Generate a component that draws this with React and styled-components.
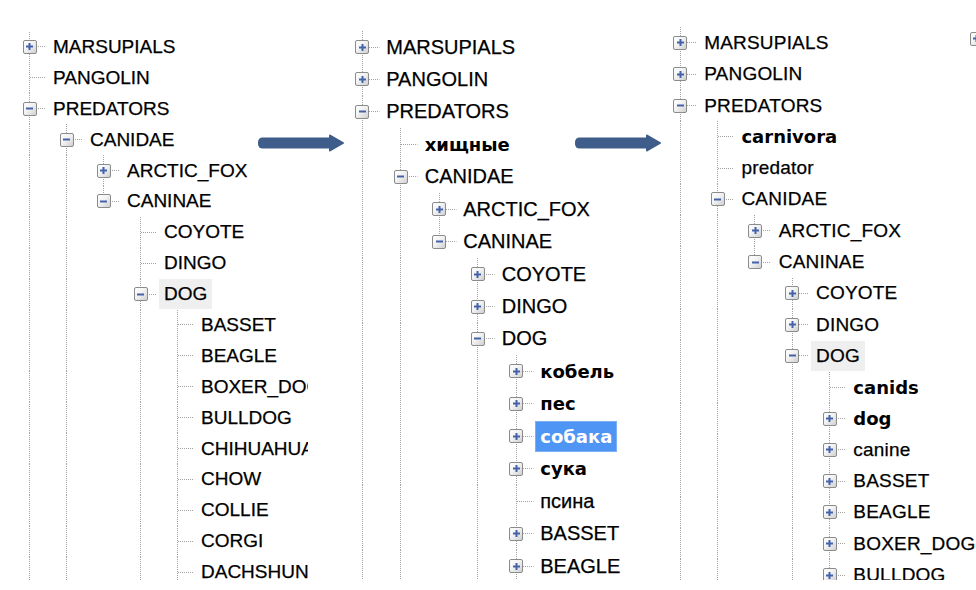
import React from 'react';
import styled, { createGlobalStyle } from 'styled-components';

const GlobalStyle = createGlobalStyle`
  html, body {
    margin: 0;
    padding: 0;
    background: #fff;
    overflow: hidden;
  }
`;

const Page = styled.div`
  position: relative;
  width: 976px;
  height: 580px;
  overflow: hidden;
  display: flex;
  align-items: flex-start;
`;

const Panel = styled.div`
  flex: 0 0 ${p => p.$width}px;
  min-width: 0;
  margin-top: ${p => p.$top}px;
  padding-left: ${p => p.$pad}px;
  box-sizing: border-box;
  overflow: ${p => (p.$clip ? 'hidden' : 'visible')};
  display: flex;
  flex-direction: column;
`;

const Row = styled.div`
  display: flex;
  align-items: center;
  height: ${p => p.$h}px;
  white-space: nowrap;
`;

const dotV = 'repeating-linear-gradient(to bottom, #a2a2a2 0 1px, transparent 1px 2px)';
const dotH = 'repeating-linear-gradient(to right, #a2a2a2 0 1px, transparent 1px 2px)';

const guideLines = ({ $v, $h, $w }) => {
  const c = Math.floor($w / 2);
  const imgs = [];
  const sizes = [];
  const pos = [];
  if ($v) {
    imgs.push(dotV);
    sizes.push(`1px ${$v === 'full' ? '100%' : '50%'}`);
    pos.push(`${c}px 0`);
  }
  if ($h) {
    imgs.push(dotH);
    sizes.push(`${$w - c - 3}px 1px`);
    pos.push(`${c + 1}px 50%`);
  }
  if (!imgs.length) return '';
  return `
    background-image: ${imgs.join(', ')};
    background-size: ${sizes.join(', ')};
    background-position: ${pos.join(', ')};
    background-repeat: no-repeat;
  `;
};

const Cell = styled.span`
  flex: 0 0 ${p => p.$w}px;
  height: 100%;
  display: flex;
  align-items: center;
  justify-content: center;
  ${guideLines}
`;

const Expander = styled.span`
  width: ${p => p.$size}px;
  height: ${p => p.$size}px;
  box-sizing: border-box;
  border: 1px solid #8a8b8b;
  border-radius: 2px;
  background: linear-gradient(135deg, #ffffff 0%, #f2f2f2 45%, #d0d0d0 100%);
  display: flex;
  align-items: center;
  justify-content: center;
`;

const Label = styled.span`
  height: ${p => p.$h}px;
  box-sizing: border-box;
  display: flex;
  align-items: center;
  padding: 0 4px;
  font-family: ${p => (p.$bold ? '"DejaVu Sans", sans-serif' : '"Liberation Sans", Arial, sans-serif')};
  font-weight: ${p => (p.$bold ? 700 : 400)};
  font-size: ${p => (p.$bold ? p.$boldSize : p.$size)}px;
  letter-spacing: ${p => (p.$bold ? 0 : p.$ls)}px;
  -webkit-text-stroke: ${p => (p.$bold ? 0 : 0.25)}px currentColor;
  color: ${p => (p.$state === 'selected' ? '#fff' : '#000')};
  background: ${p =>
    p.$state === 'selected' ? '#4f95f3' : p.$state === 'hover' ? '#efefef' : 'transparent'};
  border: 1px solid ${p => (p.$state === 'selected' ? '#7cb0f6' : 'transparent')};
`;

const Arrow = styled.svg`
  position: absolute;
  left: ${p => p.$x}px;
  top: ${p => p.$y}px;
`;

const Glyph = ({ open }) => (
  <svg width="7" height="7" viewBox="0 0 7 7">
    <rect x="0" y="2.5" width="7" height="2" fill="#4462a9" />
    {!open && <rect x="2.5" y="0" width="2" height="7" fill="#4462a9" />}
  </svg>
);

const BlueArrow = ({ x, y }) => (
  <Arrow $x={x} $y={y} width="88" height="18" viewBox="0 0 88 18">
    <rect x="1" y="3.5" width="76" height="11" rx="4.5" fill="#3f5d8a" />
    <path d="M73 1.5 L86 9 L73 16.5 Z" fill="#3f5d8a" stroke="#3f5d8a" strokeWidth="2" strokeLinejoin="round" />
  </Arrow>
);

const n = (level, label, exp, extra = {}) => ({ level, label, exp, ...extra });

const hasNext = (items, i) => {
  const L = items[i].level;
  if (items[i].last) return false;
  for (let j = i + 1; j < items.length; j++) {
    if (items[j].level < L) return false;
    if (items[j].level === L) return true;
  }
  return true;
};

const ancestorOf = (items, i, k) => {
  for (let j = i - 1; j >= 0; j--) {
    if (items[j].level === k) return j;
  }
  return -1;
};

const Tree = ({ items, cfg }) => (
  <Panel $width={cfg.width} $top={cfg.top} $pad={cfg.pad} $clip={cfg.clip}>
    {items.map((it, i) => {
      const guides = [];
      for (let k = 0; k < it.level; k++) {
        const a = ancestorOf(items, i, k);
        guides.push(a >= 0 && hasNext(items, a) ? 'full' : null);
      }
      return (
        <Row key={i} $h={cfg.rowH}>
          {guides.map((g, k) => (
            <Cell key={k} $w={cfg.indent} $v={g} />
          ))}
          <Cell $w={cfg.indent} $v={hasNext(items, i) ? 'full' : 'top'} $h>
            {it.exp && (
              <Expander $size={cfg.box}>
                <Glyph open={it.exp === '-'} />
              </Expander>
            )}
          </Cell>
          <Label
            $h={cfg.rowH - 1}
            $bold={it.bold}
            $state={it.state}
            $size={cfg.font}
            $boldSize={cfg.boldFont}
            $ls={cfg.ls}
          >
            {it.label}
          </Label>
        </Row>
      );
    })}
  </Panel>
);

const first = [
  n(0, 'MARSUPIALS', '+'),
  n(0, 'PANGOLIN', null),
  n(0, 'PREDATORS', '-'),
  n(1, 'CANIDAE', '-'),
  n(2, 'ARCTIC_FOX', '+'),
  n(2, 'CANINAE', '-', { last: true }),
  n(3, 'COYOTE', null),
  n(3, 'DINGO', null),
  n(3, 'DOG', '-', { state: 'hover' }),
  n(4, 'BASSET', null),
  n(4, 'BEAGLE', null),
  n(4, 'BOXER_DOG', null),
  n(4, 'BULLDOG', null),
  n(4, 'CHIHUAHUA', null),
  n(4, 'CHOW', null),
  n(4, 'COLLIE', null),
  n(4, 'CORGI', null),
  n(4, 'DACHSHUND', null),
];

const second = [
  n(0, 'MARSUPIALS', '+'),
  n(0, 'PANGOLIN', '+'),
  n(0, 'PREDATORS', '-'),
  n(1, 'хищные', null, { bold: true }),
  n(1, 'CANIDAE', '-'),
  n(2, 'ARCTIC_FOX', '+'),
  n(2, 'CANINAE', '-', { last: true }),
  n(3, 'COYOTE', '+'),
  n(3, 'DINGO', '+'),
  n(3, 'DOG', '-'),
  n(4, 'кобель', '+', { bold: true }),
  n(4, 'пес', '+', { bold: true }),
  n(4, 'собака', '+', { bold: true, state: 'selected' }),
  n(4, 'сука', '+', { bold: true }),
  n(4, 'псина', null),
  n(4, 'BASSET', '+'),
  n(4, 'BEAGLE', '+'),
];

const third = [
  n(0, 'MARSUPIALS', '+'),
  n(0, 'PANGOLIN', '+'),
  n(0, 'PREDATORS', '-'),
  n(1, 'carnivora', null, { bold: true }),
  n(1, 'predator', null),
  n(1, 'CANIDAE', '-'),
  n(2, 'ARCTIC_FOX', '+'),
  n(2, 'CANINAE', '-', { last: true }),
  n(3, 'COYOTE', '+'),
  n(3, 'DINGO', '+'),
  n(3, 'DOG', '-', { state: 'hover' }),
  n(4, 'canids', null, { bold: true }),
  n(4, 'dog', '+', { bold: true }),
  n(4, 'canine', '+'),
  n(4, 'BASSET', '+'),
  n(4, 'BEAGLE', '+'),
  n(4, 'BOXER_DOG', '+'),
  n(4, 'BULLDOG', '+'),
];

const fourth = [n(0, 'MARSUPIALS', '+')];

const panels = [
  { items: first, cfg: { width: 308, top: 31.5, pad: 11, indent: 37, rowH: 30.9, font: 19, boldFont: 17, ls: 0, box: 14, clip: true } },
  { items: second, cfg: { width: 353.85, top: 30.8, pad: 34.75, indent: 38.5, rowH: 32.44, font: 20, boldFont: 18, ls: 0, box: 14, clip: true } },
  { items: third, cfg: { width: 296.5, top: 27.35, pad: 0, indent: 37.3, rowH: 31.3, font: 19, boldFont: 18, ls: 0.2, box: 14, clip: false } },
  { items: fourth, cfg: { width: 60, top: 23.35, pad: 0, indent: 37.3, rowH: 31.3, font: 19, boldFont: 18, ls: 0.2, box: 14, clip: false } },
];

export default function App() {
  return (
    <>
      <GlobalStyle />
      <Page>
        {panels.map((p, i) => (
          <Tree key={i} items={p.items} cfg={p.cfg} />
        ))}
        <BlueArrow x={257} y={134} />
        <BlueArrow x={574} y={134} />
      </Page>
    </>
  );
}
